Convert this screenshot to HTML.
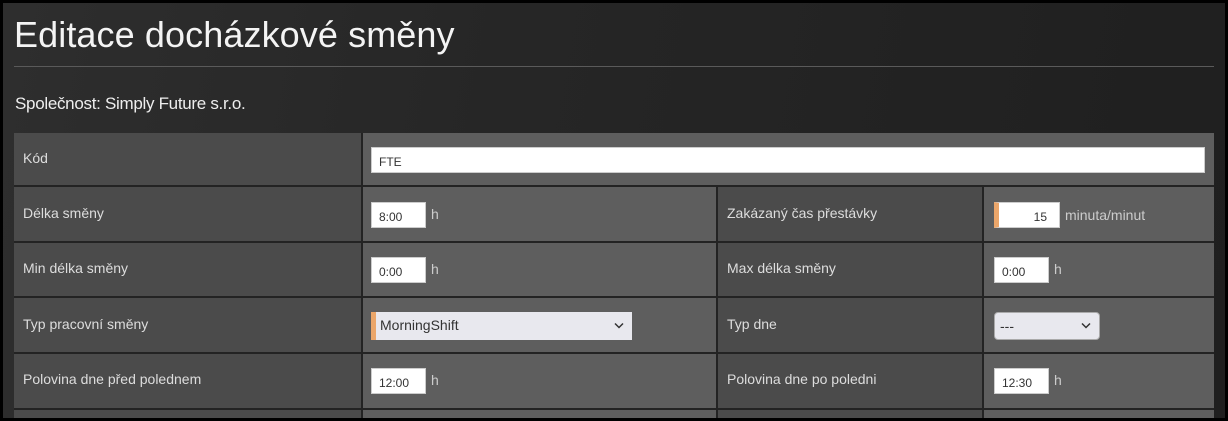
<!DOCTYPE html><html><head><meta charset="utf-8"><style>
*{margin:0;padding:0;box-sizing:border-box}
body{width:1228px;height:421px;overflow:hidden;background:#000;font-family:"Liberation Sans",sans-serif;position:relative}
.bg{position:absolute;left:3px;top:3px;width:1222px;height:415px;background:linear-gradient(100deg,#2e2e2e 0%,#262626 40%,#1f1f1f 100%)}
.a{position:absolute}
.t{left:14px;top:14px;font-size:36px;color:#f4f4f4;letter-spacing:.1px}
.hr{left:14px;top:66px;width:1200px;height:1px;background:#5a5a5a}
.co{left:15px;top:94px;font-size:17px;color:#eee;letter-spacing:-.3px}
.l{background:#4b4b4b;color:#ddd;font-size:14px;padding-left:9px}
.v{background:#5e5e5e}
.in{background:#fff;border:1px solid #ccc;font-size:12px;color:#333;padding:7px 0 0 7px;height:26px}
.h{font-size:14px;color:#ccc}
.sel{background:#e8e8ee;font-size:14px;color:#333;height:28px;padding:5px 0 0 9px}
.or{border-left:5px solid #eba66a}
.chev{position:absolute;right:8px;top:10px}
</style></head><body>
<div class="bg"></div>
<div class="a t">Editace docházkové směny</div>
<div class="a hr"></div>
<div class="a co">Společnost: Simply Future s.r.o.</div>
<div class="a" style="left:14px;top:133px;width:1200px;height:285px;background:#232323"></div>
<div class="a l" style="left:14px;top:133px;width:347px;height:52px;padding-top:17px">Kód</div>
<div class="a v" style="left:363px;top:133px;width:851px;height:52px"></div>
<div class="a in" style="left:371px;top:147px;width:834px">FTE</div>

<div class="a l" style="left:14px;top:187px;width:347px;height:54px;padding-top:18px">Délka směny</div>
<div class="a v" style="left:363px;top:187px;width:353px;height:54px"></div>
<div class="a l" style="left:718px;top:187px;width:264px;height:54px;padding-top:18px">Zakázaný čas přestávky</div>
<div class="a v" style="left:984px;top:187px;width:230px;height:54px"></div>
<div class="a in" style="left:371px;top:202px;width:55px">8:00</div><div class="a h" style="left:431px;top:206px">h</div>
<div class="a in or" style="left:994px;top:202px;width:66px;text-align:right;padding-right:12px">15</div><div class="a h" style="left:1065px;top:207px">minuta/minut</div>

<div class="a l" style="left:14px;top:243px;width:347px;height:53px;padding-top:17px">Min délka směny</div>
<div class="a v" style="left:363px;top:243px;width:353px;height:53px"></div>
<div class="a l" style="left:718px;top:243px;width:264px;height:53px;padding-top:17px">Max délka směny</div>
<div class="a v" style="left:984px;top:243px;width:230px;height:53px"></div>
<div class="a in" style="left:371px;top:257px;width:55px">0:00</div><div class="a h" style="left:431px;top:261px">h</div>
<div class="a in" style="left:994px;top:257px;width:55px">0:00</div><div class="a h" style="left:1054px;top:261px">h</div>

<div class="a l" style="left:14px;top:298px;width:347px;height:54px;padding-top:18px">Typ pracovní směny</div>
<div class="a v" style="left:363px;top:298px;width:353px;height:54px"></div>
<div class="a l" style="left:718px;top:298px;width:264px;height:54px;padding-top:18px">Typ dne</div>
<div class="a v" style="left:984px;top:298px;width:230px;height:54px"></div>
<div class="a sel or" style="left:371px;top:312px;width:261px;padding-left:4px">MorningShift<svg class="chev" width="10" height="7" viewBox="0 0 10 7"><path d="M1 1.5L5 5.5L9 1.5" fill="none" stroke="#333" stroke-width="1.5"/></svg></div>
<div class="a sel" style="left:994px;top:312px;width:106px;border:1px solid #aaa;border-radius:4px;padding-left:5px">---<svg class="chev" style="top:9px" width="10" height="7" viewBox="0 0 10 7"><path d="M1 1.5L5 5.5L9 1.5" fill="none" stroke="#333" stroke-width="1.5"/></svg></div>

<div class="a l" style="left:14px;top:354px;width:347px;height:54px;padding-top:17px">Polovina dne před polednem</div>
<div class="a v" style="left:363px;top:354px;width:353px;height:54px"></div>
<div class="a l" style="left:718px;top:354px;width:264px;height:54px;padding-top:17px">Polovina dne po poledni</div>
<div class="a v" style="left:984px;top:354px;width:230px;height:54px"></div>
<div class="a in" style="left:371px;top:368px;width:55px">12:00</div><div class="a h" style="left:431px;top:372px">h</div>
<div class="a in" style="left:994px;top:368px;width:55px">12:30</div><div class="a h" style="left:1054px;top:372px">h</div>

<div class="a l" style="left:14px;top:410px;width:347px;height:8px"></div>
<div class="a v" style="left:363px;top:410px;width:353px;height:8px"></div>
<div class="a l" style="left:718px;top:410px;width:264px;height:8px"></div>
<div class="a v" style="left:984px;top:410px;width:230px;height:8px"></div>
</body></html>
